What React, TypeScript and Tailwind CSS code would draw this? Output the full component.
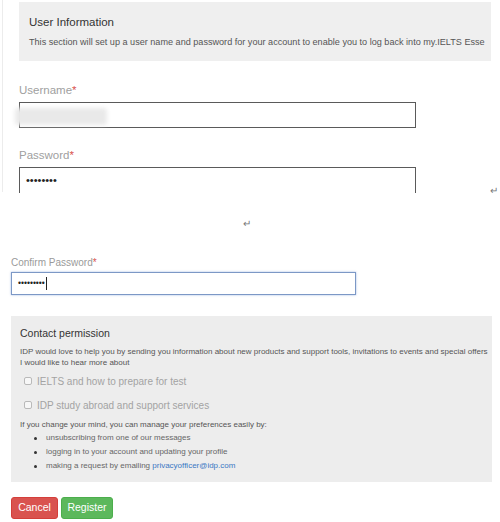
import React from "react";

const font = "font-['Liberation_Sans',Arial,sans-serif]";

function Label({ text, className }: { text: string; className: string }) {
  return (
    <div className={className}>
      {text}
      <span className="text-[#d9534f]">*</span>
    </div>
  );
}

function Check({ label }: { label: string }) {
  return (
    <label className="flex h-[14px] items-center gap-[5px] pl-[4px] text-[10px] text-[#a3a3a3]">
      <span className="h-[8px] w-[8px] rounded-[2px] border border-[#b9b9b9] bg-[#f7f7f7]" />
      {label}
    </label>
  );
}

export default function App() {
  const bullets = [
    "unsubscribing from one of our messages",
    "logging in to your account and updating your profile",
  ];

  return (
    <div className={`relative h-[522px] w-[500px] overflow-hidden bg-white ${font}`}>
      {/* user information block */}
      <div className="ml-[2px] h-[192px] border-l border-[#ececec] pl-[16px] pt-[2px]">
        <div className="h-[59px] w-[472px] overflow-hidden bg-[#efefef] pl-[10px] pt-[13px]">
          <div className="text-[11.5px] leading-[14px] text-[#333]">User Information</div>
          <div className="mt-[8px] whitespace-nowrap text-[9.1px] leading-[11px] text-[#555]">
            This section will set up a user name and password for your account to enable you to log back into my.IELTS Esse
          </div>
        </div>

        <Label text="Username" className="mt-[22px] text-[11.5px] leading-[14px] text-[#a0a0a0]" />
        <div className="relative mt-[5px] h-[26px] w-[397px] border border-[#5a5a5a]">
          <div className="absolute left-[-5px] top-[5px] h-[17px] w-[92px] rounded-[3px] bg-[#e9e9e9] blur-[2px]" />
        </div>

        <Label text="Password" className="mt-[20px] text-[11.5px] leading-[14px] text-[#a0a0a0]" />
        <div className="mt-[5px] flex h-[26px] w-[397px] items-center border-x border-t border-[#5a5a5a] pl-[6px] text-[11px] leading-none text-[#222]">
          ••••••••
        </div>
      </div>

      <div className="absolute left-[490px] top-[183px] text-[10px] text-[#777]">↵</div>
      <div className="ml-[243px] mt-[26px] h-[12px] text-[10px] leading-[12px] text-[#777]">↵</div>

      {/* confirm password */}
      <div className="pl-[11px]">
        <Label text="Confirm Password" className="mt-[27px] text-[10px] leading-[12px] text-[#9a9a9a]" />
        <div className="mt-[3px] flex h-[23px] w-[345px] items-center border border-[#7c98c6] pl-[6px] text-[8.5px] leading-none text-[#222] shadow-[0_0_2px_rgba(102,140,210,0.6)]">
          •••••••••
          <span className="ml-[1px] h-[13px] w-px bg-[#222]" />
        </div>

        {/* contact permission */}
        <div className="mt-[21px] h-[166px] w-[481px] bg-[#ededed] pl-[9px] pt-[10px]">
          <div className="text-[10.5px] leading-[14px] text-[#333]">Contact permission</div>
          <div className="mt-[6px] whitespace-nowrap text-[8px] leading-[11px] text-[#555]">
            IDP would love to help you by sending you information about new products and support tools, invitations to events and special offers
            <br />I would like to hear more about
          </div>
          <div className="mt-[6px] flex flex-col gap-[10px]">
            <Check label="IELTS and how to prepare for test" />
            <Check label="IDP study abroad and support services" />
          </div>
          <div className="mt-[8px] text-[8px] leading-[10px] text-[#555]">
            If you change your mind, you can manage your preferences easily by:
          </div>
          <ul className="mt-[3px] flex flex-col gap-[4px] pl-[14px] text-[8px] leading-[10px] text-[#666]">
            {bullets.map((b) => (
              <li key={b} className="flex items-center gap-[9px]">
                <span className="h-[3px] w-[3px] rounded-full bg-[#333]" />
                {b}
              </li>
            ))}
            <li className="flex items-center gap-[9px]">
              <span className="h-[3px] w-[3px] rounded-full bg-[#333]" />
              <span>
                making a request by emailing <span className="text-[#3b78c4]">privacyofficer@idp.com</span>
              </span>
            </li>
          </ul>
        </div>

        <div className="mt-[15px] flex gap-[3px]">
          <button className="h-[22px] w-[47px] rounded-[3px] border border-[#d43f3a] bg-[#d9534f] text-[10.5px] text-white">
            Cancel
          </button>
          <button className="h-[22px] w-[52px] rounded-[3px] border border-[#4cae4c] bg-[#5cb85c] text-[10.5px] text-white">
            Register
          </button>
        </div>
      </div>
    </div>
  );
}
